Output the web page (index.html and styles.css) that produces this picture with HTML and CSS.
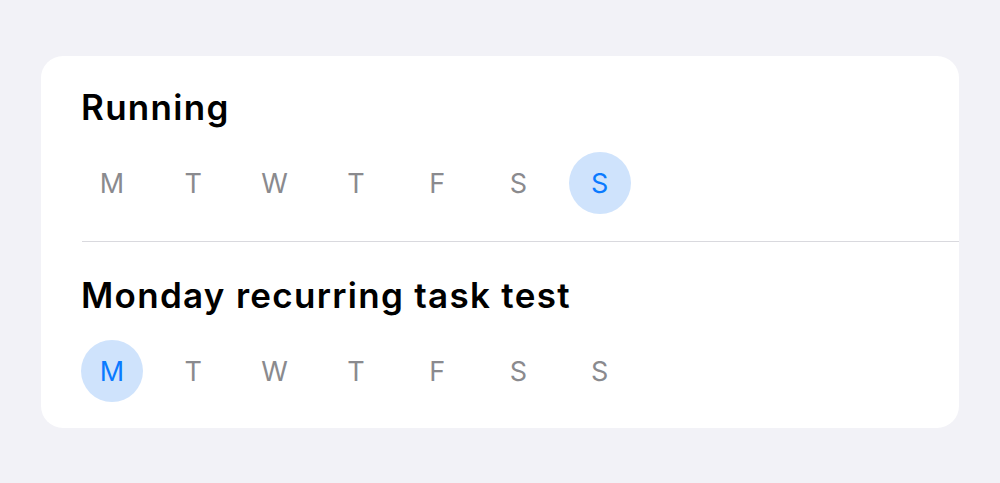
FILE: index.html
```html
<!DOCTYPE html>
<html lang="en">
<head>
    <meta charset="UTF-8">
    <meta name="viewport" content="width=device-width, initial-scale=1.0">
    <title>Recurring Tasks</title>
    <link rel="stylesheet" href="styles.css">
</head>
<body>

    <div class="card">
        <div class="task">
            <h2 class="task-title">Running</h2>
            <div class="days">
                <span class="day">M</span>
                <span class="day">T</span>
                <span class="day">W</span>
                <span class="day">T</span>
                <span class="day">F</span>
                <span class="day">S</span>
                <span class="day active">S</span>
            </div>
        </div>

        <div class="task">
            <h2 class="task-title">Monday recurring task test</h2>
            <div class="days">
                <span class="day active">M</span>
                <span class="day">T</span>
                <span class="day">W</span>
                <span class="day">T</span>
                <span class="day">F</span>
                <span class="day">S</span>
                <span class="day">S</span>
            </div>
        </div>
    </div>

</body>
</html>
```

FILE: styles.css
```css
/* General Styles */
body {
    margin: 0;
    background-color: #f2f2f7;
    font-family: Inter, "Noto Sans", sans-serif;
    color: #000;
}

/* Card */
.card {
    margin: 56px 41px 0;
    background: #fff;
    border-radius: 22px;
    padding-top: 31px;
}

.task {
    margin-left: 40px;
    padding-bottom: 27px;
}

.task + .task {
    border-top: 1px solid #d9d9de;
    margin-left: 41px;
    padding-top: 33px;
    padding-bottom: 26px;
}

.task + .task .task-title,
.task + .task .days {
    margin-left: -1px;
}

.task-title {
    margin: 0 0 25px;
    font-size: 35px;
    line-height: 40px;
    font-weight: 600;
    letter-spacing: 1.3px;
}

/* Weekday pills */
.days {
    display: flex;
    gap: 19.3px;
}

.day {
    width: 62px;
    height: 62px;
    border-radius: 50%;
    display: flex;
    align-items: center;
    justify-content: center;
    font-size: 27px;
    font-weight: 400;
    color: #8a8a8e;
}

.day.active {
    background: #cfe3fc;
    color: #0a7aff;
}
```
